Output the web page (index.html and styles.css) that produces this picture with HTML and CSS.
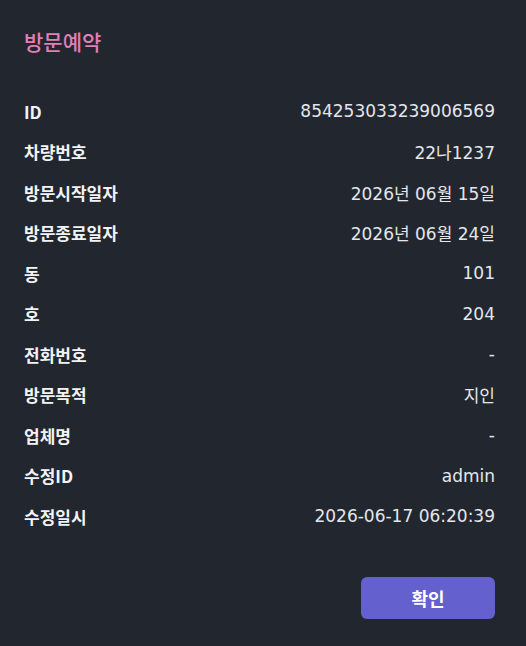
FILE: index.html
```html
<!DOCTYPE html>
<html lang="ko">
<head>
  <meta charset="UTF-8" />
  <meta name="viewport" content="width=device-width, initial-scale=1.0"/>
  <title>방문예약</title>
  <link rel="stylesheet" href="styles.css">
</head>
<body>
  <div class="dialog">
    <h2 class="title">방문예약</h2>

    <div class="rows">
      <div class="row"><span class="label">ID</span><span class="value">854253033239006569</span></div>
      <div class="row"><span class="label">차량번호</span><span class="value">22나1237</span></div>
      <div class="row"><span class="label">방문시작일자</span><span class="value">2026년 06월 15일</span></div>
      <div class="row"><span class="label">방문종료일자</span><span class="value">2026년 06월 24일</span></div>
      <div class="row"><span class="label">동</span><span class="value">101</span></div>
      <div class="row"><span class="label">호</span><span class="value">204</span></div>
      <div class="row"><span class="label">전화번호</span><span class="value">-</span></div>
      <div class="row"><span class="label">방문목적</span><span class="value">지인</span></div>
      <div class="row"><span class="label">업체명</span><span class="value">-</span></div>
      <div class="row"><span class="label">수정ID</span><span class="value">admin</span></div>
      <div class="row"><span class="label">수정일시</span><span class="value">2026-06-17 06:20:39</span></div>
    </div>

    <div class="actions">
      <button class="ok-btn">확인</button>
    </div>
  </div>
</body>
</html>
```

FILE: styles.css
```css
* {
  box-sizing: border-box;
}

html, body {
  margin: 0;
  padding: 0;
}

body {
  background: #22262f;
  color: #eceef2;
  font-family: "Noto Sans CJK KR", "Noto Sans", sans-serif;
  min-height: 100vh;
}

.dialog {
  padding: 26px 31px 26px 24px;
}

.title {
  margin: 0 0 35px;
  font-size: 21px;
  font-weight: 500;
  color: #e27fb6;
  line-height: 30px;
}

.row {
  display: flex;
  justify-content: space-between;
  align-items: center;
  height: 40.5px;
  font-size: 17px;
}

.label {
  font-weight: 700;
  color: #f2f3f5;
}

.value {
  font-family: "DejaVu Sans", "Noto Sans CJK KR", sans-serif;
  color: #e4e6ea;
}

.actions {
  display: flex;
  justify-content: flex-end;
  margin-top: 40px;
}

.ok-btn {
  width: 134px;
  height: 42px;
  border: none;
  border-radius: 6px;
  background: #6461cf;
  color: #fff;
  font-family: inherit;
  font-size: 18px;
  font-weight: 700;
  cursor: pointer;
}
```
